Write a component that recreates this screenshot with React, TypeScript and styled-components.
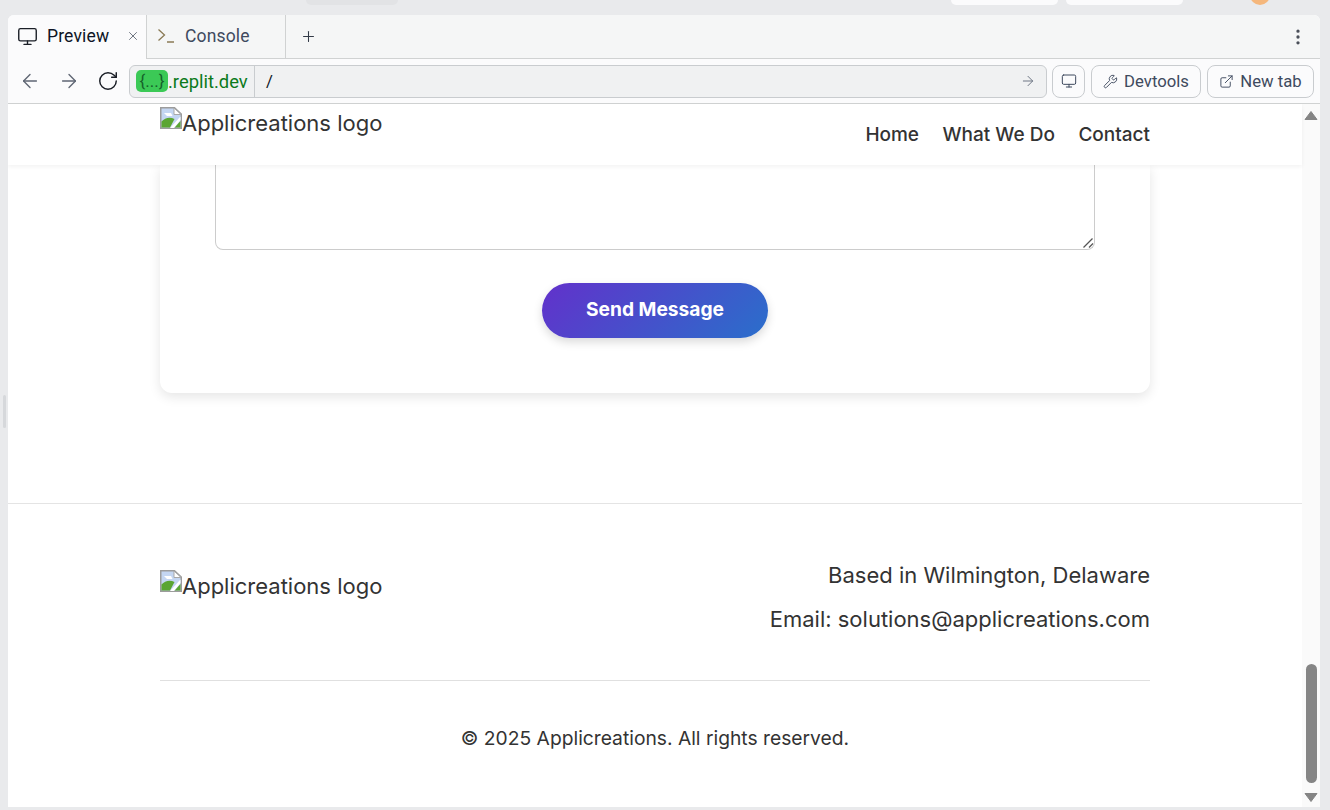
import React from "react";
import styled, { createGlobalStyle } from "styled-components";
import { Monitor, X, ArrowLeft, ArrowRight, RotateCw, Wrench, ExternalLink, Plus, EllipsisVertical } from "lucide-react";

const Global = createGlobalStyle`
  html, body { margin: 0; padding: 0; background: #e9eaec; overflow: hidden; }
  * { box-sizing: border-box; }
`;
const chrome = `"Roboto", "Liberation Sans", sans-serif`;
const page = `"Inter", "Liberation Sans", sans-serif`;

const Screen = styled.div`
  width: 1330px; height: 810px; background: #e9eaec;
  display: flex; flex-direction: column; overflow: hidden;
`;
const TopStrip = styled.div`height: 15px; display: flex; align-items: flex-start; overflow: hidden;`;
const StripPill = styled.div<{ $w: number; $ml: number; $c: string }>`
  width: ${p => p.$w}px; margin-left: ${p => p.$ml}px; height: 5px;
  background: ${p => p.$c}; border-radius: 0 0 5px 5px;
`;
const StripDot = styled.div`
  width: 20px; height: 20px; margin-left: 67px; margin-top: -15px; background: #f5b77c; border-radius: 50%;
`;
const Body = styled.div`display: flex; height: 792px;`;
const Gutter = styled.div`width: 8px; display: flex; align-items: center; justify-content: center;`;
const Grip = styled.div`width: 3px; height: 33px; border-radius: 2px; background: #d6d8db;`;
const Pane = styled.div`
  width: 1312px; display: flex; flex-direction: column; background: #fff;
  border-radius: 6px 6px 0 0; overflow: hidden;
`;
const Tabs = styled.div`
  height: 44px; flex: none; display: flex; background: #f5f6f6; border-bottom: 1px solid #d0d2d2;
  font-family: ${chrome}; font-size: 17.5px; letter-spacing: .15px;
`;
const Tab = styled.div<{ $active?: boolean; $w: number }>`
  width: ${p => p.$w}px; height: ${p => (p.$active ? 44 : 43)}px; display: flex; align-items: center;
  background: ${p => (p.$active ? "#fbfbfc" : "transparent")};
  border-right: 1px solid #d0d2d2; color: ${p => (p.$active ? "#0e1525" : "#3f4a5e")};
  padding-left: ${p => (p.$active ? 9 : 10)}px; padding-bottom: 2px;
`;
const TabLabel = styled.span<{ $ml: number; $w: number }>`margin-left: ${p => p.$ml}px; width: ${p => p.$w}px;`;
const AddTab = styled.div`width: 46px; display: flex; align-items: center; justify-content: center; color: #333a47; margin-left: -1px;`;
const Spacer = styled.div`flex: 1;`;
const Kebab = styled.div`width: 44px; display: flex; align-items: center; justify-content: center; color: #4a4f59;`;
const AddressRow = styled.div`
  height: 45px; flex: none; display: flex; align-items: center; background: #fbfbfc;
  border-bottom: 1px solid #d0d2d2; padding-left: 2px; font-family: ${chrome}; font-size: 16.7px;
`;
const NavIcon = styled.div<{ $c: string }>`
  width: 39px; height: 30px; display: flex; align-items: center; justify-content: center; color: ${p => p.$c};
`;
const Address = styled.div`
  width: 918px; height: 33px; margin-left: 2px; display: flex; align-items: center;
  background: #f0f1f2; border: 1px solid #c9cccf; border-radius: 6px; color: #0e1525;
`;
const Host = styled.div`
  height: 31px; display: flex; align-items: center; padding: 0 6px; border-right: 1px solid #c9cccf;
  color: #0b7a1b; width: 125px; font-size: 18.4px; flex: none; white-space: nowrap;
`;
const Slug = styled.span`
  width: 32px; height: 22px; border-radius: 5px; background: #3bc956; color: #15622a;
  display: flex; align-items: center; justify-content: center; font-size: 17px; flex: none;
`;
const Path = styled.span`margin-left: 11px; flex: 1;`;
const Go = styled.div`width: 36px; display: flex; justify-content: center; color: #6f7785;`;
const ChromeButton = styled.div<{ $w: number; $ml: number }>`
  width: ${p => p.$w}px; margin-left: ${p => p.$ml}px; height: 33px; display: flex; align-items: center;
  justify-content: center; gap: 6px; border: 1px solid #c9cccf; border-radius: 8px; background: #fbfbfc;
  color: #3f4a5e;
`;
const Viewport = styled.div`flex: 1; display: flex; min-height: 0; font-family: ${page}; color: #333;`;
const Site = styled.div`width: 1294px; display: flex; flex-direction: column; background: #fff;`;
const Header = styled.header`
  height: 61px; flex: none; position: relative; z-index: 2; background: #fff;
  box-shadow: 0 2px 4px rgba(0,0,0,.05); padding: 3px 152px 0; display: flex; justify-content: space-between;
`;
const Logo = styled.div`
  display: flex; align-items: flex-start; font-size: 22px; line-height: 27px; color: #333;
  svg { flex: none; }
`;
const LogoText = styled.span`margin-top: 3px;`;
const Nav = styled.nav`display: flex; gap: 23.5px; padding-top: 16px; font-size: 19px; font-weight: 500; line-height: 24px;`;
const Card = styled.section`
  width: 990px; height: 228px; margin-left: 152px; flex: none; background: #fff;
  border-radius: 0 0 12px 12px; box-shadow: 0 4px 12px rgba(0,0,0,.1);
  padding: 0 55px; display: flex; flex-direction: column; align-items: center;
`;
const FieldWrap = styled.div`position: relative; width: 880px; height: 85px; flex: none;`;
const TextArea = styled.textarea`
  width: 880px; height: 85px; display: block; border: 1px solid #ccc; border-top: 0;
  border-radius: 0 0 8px 8px; background: #fff; outline: none; padding: 0; resize: none;
`;
const Handle = styled.svg`position: absolute; right: 1px; bottom: 2px; width: 11px; height: 10px;`;
const Send = styled.button`
  margin-top: 33px; width: 226px; height: 55px; border: 0; border-radius: 28px; padding: 0 0 3px;
  background: linear-gradient(135deg, #6231cb 0%, #2a6fcb 100%); color: #fff;
  font-family: ${page}; font-size: 19.2px; font-weight: 700;
  box-shadow: 0 4px 10px rgba(0,0,0,.15);
`;
const Footer = styled.footer`
  margin-top: 110px; border-top: 1px solid #e4e4e4; padding: 51px 152px 0; flex: 1;
`;
const FooterTop = styled.div`display: flex; justify-content: space-between; height: 126px; border-bottom: 1px solid #e0e0e0;`;
const FooterLogo = styled(Logo)`padding-top: 15px;`;
const Contact = styled.div`text-align: right; font-size: 22px; line-height: 44px; margin-top: -2px;`;
const Copy = styled.p`
  margin: 46px 0 0; text-align: center; font-size: 19.25px; line-height: 23px;
`;
const Scrollbar = styled.div`
  width: 18px; background: #fafafa; display: flex; flex-direction: column; align-items: center;
  padding: 7px 0 5px 0;
`;
const Thumb = styled.div`
  width: 11px; height: 119px; margin-top: auto; margin-bottom: 10px; background: #858585; border-radius: 6px;
`;

const BrokenImage = () => (
  <svg width="22" height="22" viewBox="0 0 22 22">
    <path d="M.75.75H14.5L21.25 7V21.25H.75Z" fill="#c4d6f2" stroke="#9c9c9c" strokeWidth="1.5" />
    <path d="M14 1V7.5H21L14 1Z" fill="#fff" stroke="#a8a8a8" />
    <path d="M4 6H11L12.5 9H7Z" fill="#fff" />
    <path d="M1.5 20.5V14.5C5 10.5 10 9.5 14.5 12L10 20.5Z" fill="#5aa532" />
    <path d="M14.5 20.5L20.5 14V20.5Z" fill="#5aa532" />
    <path d="M10 21L20.5 9.5V13L14 21Z" fill="#fff" />
  </svg>
);
const ConsoleIcon = () => (
  <svg width="18" height="18" viewBox="0 0 18 18" fill="none" strokeWidth="1.3">
    <path d="M1.5 2.5L7.5 8L1.5 13.5" stroke="#8a7a55" />
    <path d="M10 15H17" stroke="#8a7a55" />
  </svg>
);
const UpArrow = () => (
  <svg width="14" height="9" viewBox="0 0 14 9"><path d="M7 0.5L13 8.5H1Z" fill="#858585" stroke="#858585" strokeLinejoin="round" /></svg>
);
const DownArrow = () => (
  <svg width="14" height="9" viewBox="0 0 14 9"><path d="M1 0.5H13L7 8.5Z" fill="#858585" stroke="#858585" strokeLinejoin="round" /></svg>
);

export default function App() {
  return (
    <Screen>
      <Global />
      <TopStrip>
        <StripPill $w={92} $ml={306} $c="#e2e3e5" />
        <StripPill $w={107} $ml={553} $c="#fbfbfc" />
        <StripPill $w={117} $ml={8} $c="#fbfbfc" />
        <StripDot />
      </TopStrip>
      <Body>
        <Gutter><Grip /></Gutter>
        <Pane>
          <Tabs>
            <Tab $active $w={139}>
              <Monitor size={21} strokeWidth={1.6} color="#1b1f27" />
              <TabLabel $ml={9} $w={79}>Preview</TabLabel>
              <X size={14} strokeWidth={1.5} color="#5c6470" />
            </Tab>
            <Tab $w={139}>
              <ConsoleIcon />
              <TabLabel $ml={10} $w={90}>Console</TabLabel>
            </Tab>
            <AddTab><Plus size={17} strokeWidth={1.5} /></AddTab>
            <Spacer />
            <Kebab><EllipsisVertical size={20} strokeWidth={2} /></Kebab>
          </Tabs>
          <AddressRow>
            <NavIcon $c="#5f6673"><ArrowLeft size={22} strokeWidth={1.5} /></NavIcon>
            <NavIcon $c="#5f6673"><ArrowRight size={22} strokeWidth={1.5} /></NavIcon>
            <NavIcon $c="#1b1f27"><RotateCw size={22} strokeWidth={1.6} /></NavIcon>
            <Address>
              <Host><Slug>{"{...}"}</Slug>.replit.dev</Host>
              <Path>/</Path>
              <Go><ArrowRight size={16} strokeWidth={1.5} /></Go>
            </Address>
            <ChromeButton $w={33} $ml={5}><Monitor size={16} strokeWidth={1.5} /></ChromeButton>
            <ChromeButton $w={110} $ml={6}><Wrench size={15} strokeWidth={1.5} />Devtools</ChromeButton>
            <ChromeButton $w={107} $ml={6}><ExternalLink size={15} strokeWidth={1.5} />New tab</ChromeButton>
          </AddressRow>
          <Viewport>
            <Site>
              <Header>
                <Logo><BrokenImage /><LogoText>Applicreations logo</LogoText></Logo>
                <Nav><span>Home</span><span>What We Do</span><span>Contact</span></Nav>
              </Header>
              <Card>
                <FieldWrap>
                  <TextArea aria-label="Message" />
                  <Handle viewBox="0 0 11 10" fill="none" stroke="#555" strokeWidth="1.3">
                    <path d="M0.5 9.5L9.5 0.5" />
                    <path d="M6 9.5L10 5.5" />
                  </Handle>
                </FieldWrap>
                <Send>Send Message</Send>
              </Card>
              <Footer>
                <FooterTop>
                  <FooterLogo><BrokenImage /><LogoText>Applicreations logo</LogoText></FooterLogo>
                  <Contact>
                    <div>Based in Wilmington, Delaware</div>
                    <div>Email: solutions@applicreations.com</div>
                  </Contact>
                </FooterTop>
                <Copy>© 2025 Applicreations. All rights reserved.</Copy>
              </Footer>
            </Site>
            <Scrollbar>
              <UpArrow />
              <Thumb />
              <DownArrow />
            </Scrollbar>
          </Viewport>
        </Pane>
      </Body>
    </Screen>
  );
}
